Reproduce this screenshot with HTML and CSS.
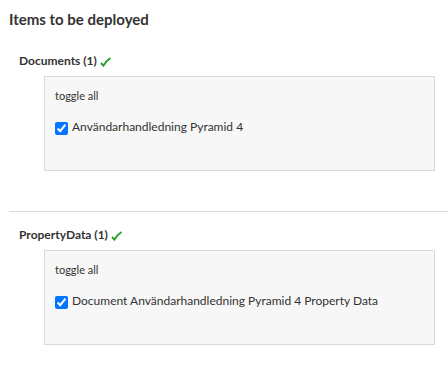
FILE: index.html
```html
<!DOCTYPE html>
<html lang="sv">
<head>
  <meta charset="UTF-8" />
  <title>Items to be deployed</title>
  <link rel="stylesheet" href="styles.css">
</head>
<body>
  <h1 class="titel">Items to be deployed</h1>

  <!-- Documents -->
  <div class="grupp">
    <h2 class="grupp-rubrik">Documents (1)
      <svg class="bock" width="11" height="10" viewBox="0 0 11 10"><path d="M1 6 L3.5 8.6 Q6 4 10.5 1" fill="none" stroke="#22a022" stroke-width="1.9"/></svg>
    </h2>
    <div class="lista">
      <a class="toggla" href="#">toggle all</a>
      <label class="rad">
        <input type="checkbox" checked />
        <span>Användarhandledning Pyramid 4</span>
      </label>
    </div>
  </div>

  <hr class="linje" />

  <!-- PropertyData -->
  <div class="grupp">
    <h2 class="grupp-rubrik">PropertyData (1)
      <svg class="bock" width="11" height="10" viewBox="0 0 11 10"><path d="M1 6 L3.5 8.6 Q6 4 10.5 1" fill="none" stroke="#22a022" stroke-width="1.9"/></svg>
    </h2>
    <div class="lista">
      <a class="toggla" href="#">toggle all</a>
      <label class="rad">
        <input type="checkbox" checked />
        <span>Document Användarhandledning Pyramid 4 Property Data</span>
      </label>
    </div>
  </div>
</body>
</html>
```

FILE: styles.css
```css
/* Grundstil */
body {
  font-family: Lato, "Open Sans", Arial, sans-serif;
  color: #333;
  margin: 0;
  padding: 9px 0 0 9px;
}

.titel {
  font-size: 15px;
  font-weight: bold;
  margin: 0 0 24px 0;
  line-height: 20px;
}

.grupp {
  padding-left: 10px;
}

.grupp-rubrik {
  font-size: 12px;
  font-weight: bold;
  margin: 0 0 7px 0;
  line-height: 16px;
  display: flex;
  align-items: center;
  gap: 3px;
}

.bock {
  margin-top: 2px;
}

.lista {
  margin-left: 25px;
  width: 369px;
  height: 76px;
  border: 1px solid #d9d9d9;
  background: #f7f7f7;
  padding: 11px 10px 6px 10px;
}

.toggla {
  display: block;
  font-size: 11px;
  line-height: 16px;
  color: #333;
  text-decoration: none;
  margin-bottom: 15px;
}

.rad {
  display: flex;
  align-items: flex-start;
  gap: 4px;
  font-size: 12px;
  line-height: 16px;
}

.rad input {
  margin: 3px 0 0 0;
  width: 13px;
  height: 13px;
  accent-color: #0075ff;
}

.linje {
  border: none;
  border-top: 1px solid #dcdcdc;
  margin: 40px 0 15px 0;
}
```
